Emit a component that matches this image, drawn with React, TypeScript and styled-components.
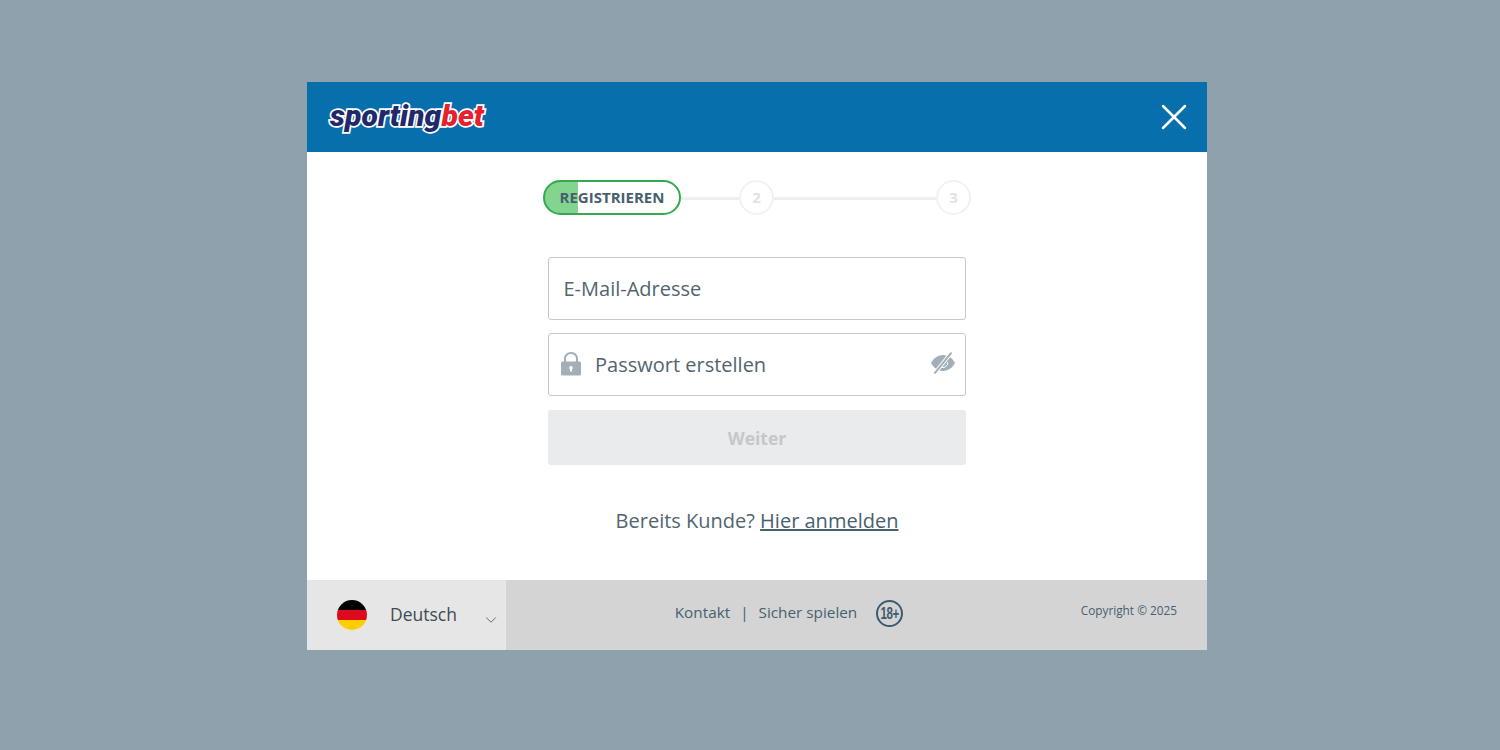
import React from 'react'
import styled, { createGlobalStyle } from 'styled-components'
import { X, ChevronDown } from 'lucide-react'

const GlobalStyle = createGlobalStyle`
  html, body {
    margin: 0;
    padding: 0;
    height: 100%;
    background: #8fa1ad;
    font-family: "Open Sans", "Liberation Sans", sans-serif;
    overflow: hidden;
  }
  * { box-sizing: border-box; }
`

const Page = styled.div`
  width: 1500px;
  height: 750px;
  padding: 82px 293px 100px 307px;
`

const Modal = styled.div`
  width: 900px;
  height: 568px;
  display: flex;
  flex-direction: column;
  background: #fff;
`

const Header = styled.header`
  height: 70px;
  flex: none;
  background: #066fac;
  display: flex;
  align-items: center;
  justify-content: space-between;
  padding: 0 11px 0 23px;
`

const Logo = styled.div`
  font-family: Roboto, "Liberation Sans", Arial, sans-serif;
  font-size: 30px;
  font-weight: 900;
  font-style: italic;
  letter-spacing: 0.1px;
  line-height: 30px;
  margin-top: -2px;
  -webkit-text-stroke: 3.4px #fff;
  paint-order: stroke fill;
`

const LogoPart = styled.span<{ $color: string }>`
  color: ${p => p.$color};
`

const CloseButton = styled.button`
  width: 44px;
  height: 44px;
  padding: 0;
  border: 0;
  background: none;
  color: #fff;
  display: flex;
  align-items: center;
  justify-content: center;
`

const Body = styled.main`
  flex: 1;
  display: flex;
  flex-direction: column;
  align-items: center;
  padding-top: 28px;
`

const Stepper = styled.div`
  width: 428px;
  height: 35px;
  margin-bottom: 42px;
  display: flex;
  align-items: center;
`

const ActiveStep = styled.div`
  width: 138px;
  height: 35px;
  flex: none;
  padding-bottom: 1px;
  border: 2px solid #34a94d;
  border-radius: 18px;
  display: flex;
  align-items: center;
  justify-content: center;
  font-size: 15px;
  font-weight: 700;
  color: #47606f;
  background: linear-gradient(to right, #82d48f 0, #82d48f 33px, #fff 33px);
`

const StepLine = styled.div<{ $width: number }>`
  width: ${p => p.$width}px;
  height: 3px;
  margin-top: 1px;
  background: #eceeef;
`

const StepDot = styled.div`
  width: 35px;
  height: 35px;
  flex: none;
  padding-bottom: 1px;
  border: 2px solid #f0f2f3;
  border-radius: 50%;
  display: flex;
  align-items: center;
  justify-content: center;
  font-size: 15px;
  font-weight: 700;
  color: #dfe3e6;
`

const Form = styled.form`
  width: 418px;
  display: flex;
  flex-direction: column;
  gap: 13px;
`

const Field = styled.div<{ $icon?: boolean }>`
  height: 63px;
  border: 1px solid #c4c8cb;
  border-radius: 3px;
  display: flex;
  align-items: center;
  padding: 0 10px 0 ${p => (p.$icon ? '12px' : '14.5px')};
  font-size: 20px;
  color: #51656f;
`

const FieldLabel = styled.span`
  flex: 1;
`

const LockIcon = styled.svg`
  width: 20px;
  height: 24px;
  margin: -2px 14px 0 0;
  flex: none;
`

const EyeIcon = styled.svg`
  width: 24px;
  height: 22px;
  flex: none;
  margin-top: -3px;
`

const SubmitButton = styled.button`
  height: 55px;
  margin-top: 1px;
  border: 0;
  border-radius: 3px;
  background: #e9ebec;
  color: #c4c8cb;
  font-family: inherit;
  font-size: 17.5px;
  font-weight: 700;
`

const LoginLine = styled.p`
  margin: 42px 0 0;
  font-size: 20px;
  line-height: 28px;
  color: #51656f;
`

const LoginLink = styled.a`
  color: #47606f;
  text-decoration: underline;
`

const Footer = styled.footer`
  height: 70px;
  flex: none;
  background: #d4d4d4;
  display: grid;
  grid-template-columns: 199px 1fr 200px;
`

const LanguageSelect = styled.div`
  background: #e6e6e6;
  display: flex;
  align-items: center;
  padding-left: 30px;
  color: #3f4b52;
  font-size: 17.5px;
  position: relative;
`

const Flag = styled.div`
  width: 30px;
  height: 30px;
  border-radius: 50%;
  margin-right: 23px;
  background: linear-gradient(to bottom, #000 0, #000 33.3%, #dd0a1e 33.3%, #dd0a1e 66.6%, #ffce00 66.6%);
`

const LanguageName = styled.span`
  margin-top: -2px;
`

const Caret = styled.span`
  position: absolute;
  right: 6px;
  top: 31px;
  display: flex;
  color: #5c6b74;
`

const FooterLinks = styled.nav`
  display: flex;
  align-items: center;
  justify-content: center;
  font-size: 15.3px;
  color: #47606f;
  padding: 0 0 7px 0;
  margin-left: 65px;
`

const Separator = styled.span`
  margin: 0 10px;
`

const AgeBadge = styled.span`
  width: 27px;
  height: 27px;
  margin: 3px 0 0 19px;
  border: 2.5px solid #3c5b70;
  border-radius: 50%;
  display: flex;
  align-items: center;
  justify-content: center;
  color: #3c5b70;
`

const AgeText = styled.span`
  display: inline-block;
  font-family: "Liberation Sans", Arial, sans-serif;
  font-size: 17px;
  font-weight: 700;
  letter-spacing: -0.5px;
  line-height: 1;
  white-space: nowrap;
  transform: scaleX(0.68);
`

const Copyright = styled.div`
  display: flex;
  align-items: center;
  justify-content: flex-end;
  padding: 0 30px 10px 0;
  font-size: 11.8px;
  color: #47606f;
`

const App: React.FC = () => {
  return (
    <Page>
      <GlobalStyle />
      <Modal>
        <Header>
          <Logo>
            <LogoPart $color="#22296b">sporting</LogoPart>
            <LogoPart $color="#e8202e">bet</LogoPart>
          </Logo>
          <CloseButton aria-label="Schließen">
            <X size={46} strokeWidth={2.6} absoluteStrokeWidth />
          </CloseButton>
        </Header>

        <Body>
          <Stepper>
            <ActiveStep>REGISTRIEREN</ActiveStep>
            <StepLine $width={58} />
            <StepDot>2</StepDot>
            <StepLine $width={162} />
            <StepDot>3</StepDot>
          </Stepper>

          <Form>
            <Field>
              <FieldLabel>E-Mail-Adresse</FieldLabel>
            </Field>
            <Field $icon>
              <LockIcon viewBox="0 0 20 24">
                <path d="M4 10V6.500a6 5.500 0 0 1 12 0V10" fill="none" stroke="#a3afb8" strokeWidth="2" />
                <path
                  fillRule="evenodd"
                  d="M1.500 9.500h17a1.500 1.500 0 0 1 1.500 1.500v11a1.500 1.500 0 0 1-1.500 1.500h-17A1.500 1.500 0 0 1 0 22V11a1.500 1.500 0 0 1 1.500-1.500zM10 14a1.800 1.800 0 0 0-1 3.300V19.500h2v-2.200a1.800 1.800 0 0 0-1-3.300z"
                  fill="#a3afb8"
                />
              </LockIcon>
              <FieldLabel>Passwort erstellen</FieldLabel>
              <EyeIcon viewBox="0 0 24 22">
                <path
                  d="M12 3C6.500 3 2.200 6.800 0 11c2.200 4.200 6.500 8 12 8s9.800-3.800 12-8C21.800 6.800 17.500 3 12 3z"
                  fill="#a3afb8"
                />
                <path d="M10.500 15.500a5.200 5.200 0 0 0 6.300-5.500" fill="none" stroke="#fff" strokeWidth="1" />
                <path d="M3.500 21.500L20.500 .5" stroke="#fff" strokeWidth="3.800" />
                <path d="M4 20.800L20 1.200" stroke="#a3afb8" strokeWidth="2" strokeLinecap="round" />
              </EyeIcon>
            </Field>
            <SubmitButton type="button">Weiter</SubmitButton>
          </Form>

          <LoginLine>
            Bereits Kunde? <LoginLink href="#">Hier anmelden</LoginLink>
          </LoginLine>
        </Body>

        <Footer>
          <LanguageSelect>
            <Flag />
            <LanguageName>Deutsch</LanguageName>
            <Caret>
              <ChevronDown size={18} strokeWidth={1.3} />
            </Caret>
          </LanguageSelect>
          <FooterLinks>
            Kontakt
            <Separator>|</Separator>
            Sicher spielen
            <AgeBadge>
              <AgeText>18+</AgeText>
            </AgeBadge>
          </FooterLinks>
          <Copyright>Copyright © 2025</Copyright>
        </Footer>
      </Modal>
    </Page>
  )
}

export default App
